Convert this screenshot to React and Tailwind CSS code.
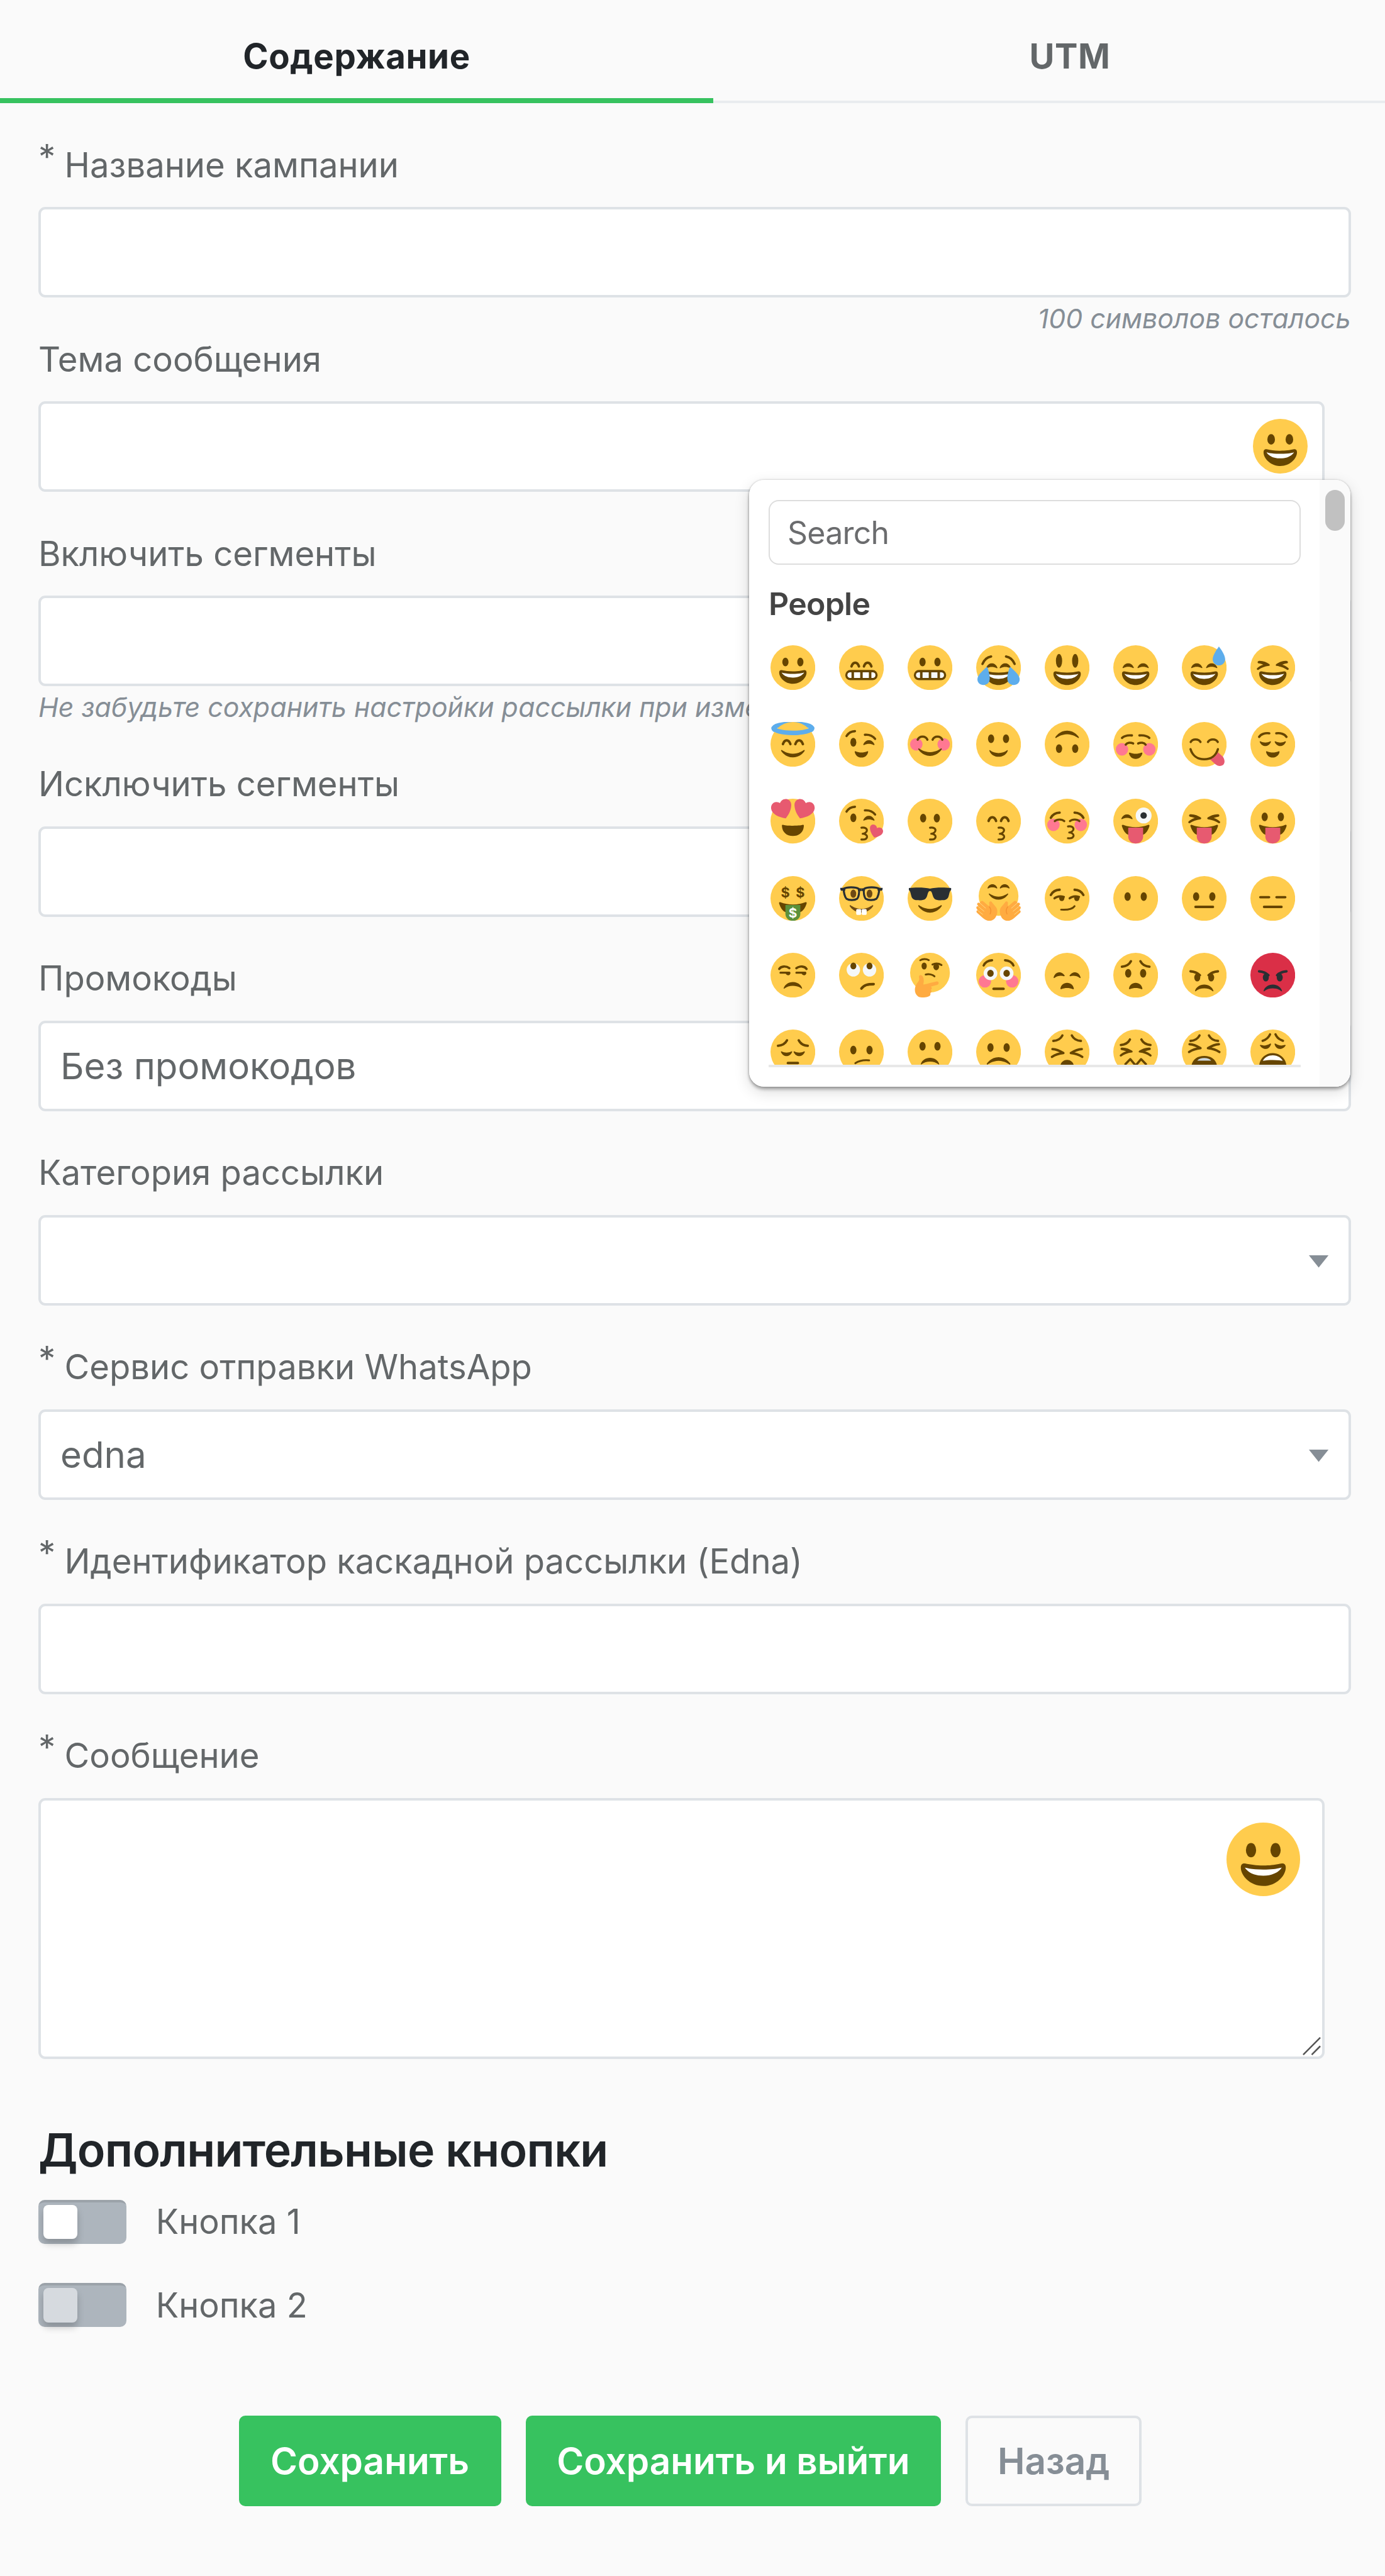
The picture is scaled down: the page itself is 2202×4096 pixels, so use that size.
import React, { useState } from "react";

//emoji colors
const YELLOW = "#ffcc4d";
const BROWN = "#664500";
const DARK = "#292f33";
const BLUE = "#5dadec";
const PINK = "#ff7892";
const RED = "#e75a70";
const HAND = "#ffab41";

//shapes shared between faces, everything is drawn on a 36x36 grid
const BIG_SMILE =
  "M27.335 22.629c-.178-.161-.444-.171-.635-.029-.039.029-3.922 2.9-8.7 2.9-4.766 0-8.662-2.871-8.7-2.9-.191-.142-.457-.13-.635.029-.177.16-.217.424-.094.628C8.7 23.472 11.788 28.5 18 28.5s9.301-5.028 9.429-5.243c.123-.205.084-.468-.094-.628z";
const SMALL_SMILE =
  "M10.6 23C10.5 22.6 10.9 22.5 11.2 22.8C13 24.3 15.5 25 18 25S23 24.3 24.8 22.8C25.1 22.5 25.5 22.6 25.4 23C24.5 26 21.5 28 18 28S11.5 26 10.6 23z";
const LITTLE_MOUTH =
  "M12.6 24.1C12.5 23.5 13 23.4 13.4 23.6C14.8 24.2 16.4 24.5 18 24.5S21.2 24.2 22.6 23.6C23 23.4 23.5 23.5 23.4 24.1C22.9 26.7 20.8 28.6 18 28.6S13.1 26.7 12.6 24.1z";
const KISS =
  "M18 23.3C21 22.9 22.5 24 22.4 25.5C22.3 27 20.5 28 19 28.2C20.8 28.3 22.6 29.2 22.5 30.7C22.3 32.3 20.5 33 18 32.8";

const Mirror = ({ children }) => (
  <>
    {children}
    <g transform="matrix(-1 0 0 1 36 0)">{children}</g>
  </>
);

const Line = ({ d, w = 2, color = BROWN }) => (
  <path d={d} fill="none" stroke={color} strokeWidth={w} strokeLinecap="round" strokeLinejoin="round" />
);

const Head = ({ color = YELLOW, cy = 18, r = 18 }) => <circle cx="18" cy={cy} r={r} fill={color} />;

const Eyes = ({ y, dx = 6, ry = 3.5, rx = 2.5, color = BROWN }) => (
  <>
    <ellipse cx={18 - dx} cy={y} rx={rx} ry={ry} fill={color} />
    <ellipse cx={18 + dx} cy={y} rx={rx} ry={ry} fill={color} />
  </>
);

//closed eye, arched up
const Closed = ({ x, y, turn = 0, flip = 1 }) => (
  <path
    transform={`translate(${x} ${y}) rotate(${turn}) scale(1 ${flip})`}
    d="M-4.5 3.3C-3.4 .9 -1.7 0 0 0S3.4 .9 4.5 3.3C4.6 3.8 4.2 4 3.7 3.7C1.5 2.6 -1.5 2.6 -3.7 3.7C-4.2 4 -4.6 3.8 -4.5 3.3z"
    fill={BROWN}
  />
);

const Caret = ({ y = 0 }) => (
  <g transform={`translate(0 ${y})`}>
    <Mirror>
      <Line d="M10 17C10.4 15.8 11.4 14 13 14S15.6 15.8 16 17" />
    </Mirror>
  </g>
);

const Grin = ({ y = 0 }) => (
  <g transform={`translate(0 ${y})`}>
    <path
      d="M18 21c-3.623 0-6.027-.422-9-1-.679-.131-2 0-2 2 0 4 4.595 9 11 9 6.404 0 11-5 11-9 0-2-1.321-2.132-2-2-2.973.578-5.377 1-9 1z"
      fill={BROWN}
    />
    <path d="M9 22s3 1 9 1 9-1 9-1-2 4-9 4-9-4-9-4z" fill="#fff" />
  </g>
);

const Teeth = ({ color }) => (
  <>
    <rect x="5" y="19.9" width="26" height="8.2" rx="4.1" fill={BROWN} />
    <rect x="6.7" y="21.7" width="22.6" height="4.6" rx="2.3" fill={color} />
    <path d="M10 21h2v6h-2zM17 21h2v6h-2zM24 21h2v6h-2z" fill={BROWN} />
  </>
);

const Squint = ({ y = 0 }) => (
  <g transform={`translate(0 ${y})`}>
    <Mirror>
      <path
        d="M6.8 12.6C10 12.4 13 13.6 15.2 15.2C15.9 15.8 15.6 16.5 14.9 16.6C11.5 17 8.6 18.2 6.5 19.7C5.5 20.2 4.7 19.1 5.5 18.3C7 17 8.6 16.2 10.4 15.7C9.2 15.1 8 14.8 6.8 14.6C5.5 14.4 5.5 12.8 6.8 12.6z"
        fill={BROWN}
      />
    </Mirror>
  </g>
);

const Squeeze = () => (
  <Mirror>
    <Line d="M6.2 15.7C9 15.8 12 17 15 18.9C11.5 19.2 8.5 20.2 5.8 22" w={1.9} />
  </Mirror>
);

const Cheeks = ({ y }) => (
  <Mirror>
    <circle cx="7" cy={y} r="5" fill={PINK} />
  </Mirror>
);

//worried brows
const Worry = ({ x = 0, y = 0 }) => (
  <Mirror>
    <g transform={`translate(${x} ${y})`}>
      <Line d="M6.9 11.2C10 11 12.8 9.5 14.2 6.8" w={1.9} />
    </g>
  </Mirror>
);

const Frown = ({ d, y = 0 }) => (
  <g transform={`translate(0 ${y})`}>
    <path transform="matrix(1 0 0 -1 0 51)" d={d} fill={BROWN} />
  </g>
);

const Tongue = ({ color = RED }) => (
  <>
    <path
      d="M7 22.2C6.6 21.2 7.3 20.8 8.2 21.1C11 22.2 14.5 22.9 18 22.9S25 22.2 27.8 21.1C28.7 20.8 29.4 21.2 29 22.2C28 25.5 26.2 28 24 29H12C9.8 28 8 25.5 7 22.2z"
      fill={BROWN}
    />
    <path d="M12 23.3H24V30.3C24 34 21 36 18 36S12 34 12 30.3z" fill={color} />
  </>
);

const WinkEyes = ({ y = 0 }) => (
  <g transform={`translate(0 ${y})`}>
    <Line d="M6 11.3C7.5 8.9 10 7.5 12.8 7.4" w={1.8} />
    <Line d="M20.8 10.3C24 10 27 11.2 29 13.6" w={1.8} />
    <ellipse cx="11.5" cy="16.3" rx="2.4" ry="3.5" fill={BROWN} />
    <Closed x={24} y={14.7} />
  </g>
);

const SideBrows = ({ y = 0 }) => (
  <g transform={`translate(0 ${y})`}>
    <Mirror>
      <Line d="M4.9 15C6.3 12.4 8.8 10.9 12 10.8" w={1.9} />
    </Mirror>
  </g>
);

const Angry = ({ color }) => (
  <>
    <Mirror>
      <Line d="M7 14.9C10 15.1 12.6 16.2 14.5 18" color={color} />
      <ellipse cx="12.4" cy="19.8" rx="2.4" ry="3.2" fill={color} />
    </Mirror>
    <path transform="matrix(1 0 0 -1 0 53.6)" d={SMALL_SMILE} fill={color} />
  </>
);

const Dollar = ({ x, y, size, color }) => (
  <text x={x} y={y} fontSize={size} fontWeight="700" fontFamily="Inter, sans-serif" textAnchor="middle" fill={color}>
    $
  </text>
);

const faces = {
  grinning: <><Head /><Eyes y={13.5} /><Grin /></>,
  beaming: <><Head /><Caret /><Teeth color="#fff" /></>,
  grimacing: <><Head /><Eyes y={13.5} /><Teeth color="#f5f8fa" /></>,
  joy: (
    <>
      <Head />
      <Mirror>
        <Line d="M5.1 15C6.2 12.3 8.5 9.6 12 9" w={1.9} />
        <Closed x={12.6} y={14.6} />
      </Mirror>
      <Grin y={1} />
      <Mirror>
        <path
          d="M8.8 17.3C10.5 21.5 11.2 25.5 10.8 28C10.4 30.5 8.4 32 6 32C3 32 1 30 1 27.3C1 24 5.5 20 8.8 17.3z"
          fill={BLUE}
        />
      </Mirror>
    </>
  ),
  smiley: <><Head /><Eyes y={12.5} dx={6.5} ry={5.6} /><Grin y={1} /></>,
  smile: <><Head /><Closed x={12} y={14.5} /><Closed x={24} y={14.5} /><Grin y={1} /></>,
  sweatSmile: (
    <>
      <Head /><Closed x={12} y={14.5} /><Closed x={24} y={14.5} /><Grin y={1} />
      <path d="M29.8 1C32.5 4.5 34.8 8.5 34.8 11.2C34.8 14 32.6 16.2 29.8 16.2S24.8 14 24.8 11.2C24.8 8.5 27.2 4.5 29.8 1z" fill={BLUE} />
    </>
  ),
  laughing: <><Head /><Squint /><Grin y={1} /></>,

  innocent: (
    <>
      <ellipse cx="18" cy="5.2" rx="15.5" ry="3.8" fill="none" stroke={BLUE} strokeWidth="3.6" />
      <Head />
      <path d="M2.5 4.6C2.5 7 9.5 8.8 18 8.8S33.5 7 33.5 4.6" fill="none" stroke={BLUE} strokeWidth="3.6" />
      <Caret y={.8} />
      <path d={BIG_SMILE} fill={BROWN} />
    </>
  ),
  wink: <><Head /><WinkEyes /><path d={LITTLE_MOUTH} fill={BROWN} /></>,
  blush: (
    <>
      <Head /><Cheeks y={18} />
      <Mirror><Line d="M8.1 14.2C9 12.4 10.5 11.8 12 11.8S15 12.4 15.9 14.2" w={1.8} /></Mirror>
      <path transform="translate(0 -1.2)" d={BIG_SMILE} fill={BROWN} />
    </>
  ),
  slightSmile: <><Head /><Eyes y={13.5} /><path d={SMALL_SMILE} fill={BROWN} /></>,
  upsideDown: (
    <>
      <Head /><Eyes y={21.4} dx={6.5} />
      <path transform="rotate(180 18 17.7)" d={BIG_SMILE} fill={BROWN} />
    </>
  ),
  relaxed: (
    <>
      <Head /><Cheeks y={22} />
      <Mirror>
        <Line d="M7 12.8C9 11 12 10.5 15 10.8" w={1.8} />
        <Line d="M10 18.2C11.2 16.5 14 16.3 16 17.3" w={1.8} />
      </Mirror>
      <path transform="translate(0 1.1)" d={LITTLE_MOUTH} fill={BROWN} />
    </>
  ),
  yum: (
    <>
      <Head />
      <Mirror><Line d="M7.1 16.1C8 14.6 9.5 14 11 14S14.1 14.6 15 16.1" w={1.8} /></Mirror>
      <path d="M29 24.3L33 28C35 31 34.5 33.5 33 34.7C31 36 28.5 35.3 27 34L22.6 29.9C25.5 28.8 27.8 27 29 24.3z" fill={RED} />
      <Line d="M7 21.9C8.5 27 12.5 30 18 30S27.5 27 29 21.9" w={1.8} />
    </>
  ),
  relieved: (
    <>
      <Head />
      <Mirror>
        <Line d="M7 12C8.5 9.6 12 8.6 15.2 9.1" w={1.8} />
        <Closed x={12} y={19.4} flip={-1} />
      </Mirror>
      <path d={LITTLE_MOUTH} fill={BROWN} />
    </>
  ),

  heartEyes: (
    <>
      <Head />
      <Mirror>
        <path
          d="M12.3 15.8C6.5 15 1.2 12.5 .5 8C.2 4.8 2.2 2.7 4.7 2.6C6 2.6 7 3 7.7 3.6C8.3 1.8 9.8 .4 12 .3C15 .2 16.8 2.5 16.7 5.3C16.5 9.5 14.5 13 12.3 15.8z"
          fill={RED}
        />
      </Mirror>
      <path d="M9.2 22C9 21 9.8 20.9 10.5 21.1C13 21.9 23 21.9 25.5 21.1C26.2 20.9 27 21 26.8 22C26.5 27 23 30 18 30S9.5 27 9.2 22z" fill={BROWN} />
    </>
  ),
  kissHeart: (
    <>
      <Head /><WinkEyes y={-.9} /><Line d={KISS} w={1.6} />
      <path
        d="M28.3 31.2C26 28.5 24.6 25.5 24.9 23C25.2 21 27 20.3 28.7 21C29.8 21.5 30.4 22.5 30.5 23.6C32 22.9 34 23 35 24.6C36 26.5 35 28.3 33.5 29.3C32 30.3 30 31 28.3 31.2z"
        fill={RED}
      />
    </>
  ),
  kissing: <><Head /><Eyes y={15.6} dx={5.5} /><Line d={KISS} w={1.6} /></>,
  kissingSmile: <><Head /><Caret y={.9} /><Line d={KISS} w={1.6} /></>,
  kissingClosed: (
    <>
      <Head /><Cheeks y={21} /><SideBrows y={.4} />
      <Mirror><Line d="M8.1 18C10 16.3 13.8 16.3 15.7 18" w={1.7} /></Mirror>
      <g transform="translate(.7 -1)"><Line d={KISS} w={1.6} /></g>
    </>
  ),
  zany: (
    <>
      <Head /><Closed x={11} y={12.6} />
      <circle cx="24.4" cy="13.5" r="6.4" fill="#f5f8fa" />
      <circle cx="24.4" cy="13.5" r="2.6" fill={DARK} />
      <Tongue />
    </>
  ),
  squintTongue: <><Head /><Squint y={-.1} /><Tongue /></>,
  tongue: <><Head /><Eyes y={14.6} dx={6.5} /><Tongue /></>,

  money: (
    <>
      <Head />
      <Dollar x={12} y={17} size={11} color={BROWN} />
      <Dollar x={24} y={17} size={11} color={BROWN} />
      <Tongue color="#5c913b" />
      <Dollar x={18} y={33.3} size={10.5} color="#fff" />
    </>
  ),
  nerd: (
    <>
      <Head />
      <ellipse cx="11.5" cy="14.2" rx="2.3" ry="3.3" fill="#6e4a14" />
      <ellipse cx="24.5" cy="14.2" rx="2.3" ry="3.3" fill="#6e4a14" />
      <Mirror>
        <Line d="M3.8 10.2C6 8.7 13.5 8.6 15.8 10.3C16.7 13 15.6 17.3 14.5 18.3C12.5 19.6 8 19.6 6 18.3C4.7 17 3.6 13 3.8 10.2z" w={1.6} color={DARK} />
        <path d="M1 9.5H5V11.8H1.6C1 11.3 .9 10.2 1 9.5zM15.5 10C16.5 9.8 17 9.8 18 9.8V12H15.5z" fill={DARK} />
      </Mirror>
      <path transform="translate(0 .9)" d={BIG_SMILE} fill="#6e4a14" />
      <rect x="13.8" y="26.6" width="4" height="4.6" rx=".8" fill="#fff" />
      <rect x="18.2" y="26.6" width="4" height="4.6" rx=".8" fill="#fff" />
    </>
  ),
  sunglasses: (
    <>
      <Head />
      <path
        d="M1 9.6C6 9 14 9 18 10.1C22 9 30 9 35 9.6V11.3C34 11.8 33.8 13 33.4 14.5C32.8 17 32.5 19.3 28 19.4C22 19.6 21.2 18.5 20.2 15.5C19.7 13.8 19.3 12 18 12S16.3 13.8 15.8 15.5C14.8 18.5 14 19.6 8 19.4C3.5 19.3 3.2 17 2.6 14.5C2.2 13 2 11.8 1 11.3z"
        fill={DARK}
      />
      <path transform="translate(0 .9)" d={BIG_SMILE} fill={BROWN} />
    </>
  ),
  hugging: (
    <>
      <Head cy={16} r={16} />
      <Mirror>
        <g transform="translate(2.1 .7) scale(.87)"><Closed x={12.6} y={6.8} /></g>
      </Mirror>
      <path transform="translate(3.2 -4.4) scale(.82)" d={BIG_SMILE} fill={BROWN} />
      <Mirror>
        <path
          d="M10.6 21C11.3 19.9 12.6 20.4 12.8 21.3L15.3 24.3C17.3 26.3 17.4 29 16.2 32C15 35 12.6 36 10.5 36C8 36 6 34.5 4 32.5L.6 29.4C-.2 28.4 .4 27.3 1.4 27.7L.3 26C-.2 24.7 .7 23.9 1.8 24.4L.8 22.9C.6 21.5 1.8 20.9 2.8 21.7L3.6 20.4C4.6 19.6 5.3 20 6 20.6L10.3 24.3C10.9 23 10.1 22 10.6 21z"
          fill={HAND}
        />
        <Line d="M3.2 21.9L7.6 25.8M1.9 24.7L6.3 28.3M1.6 27.9L5.2 30.8" w={.5} color="#ffd983" />
        <Line d="M10.6 24.8C12 26.4 12.2 28.5 11.2 30.5" w={.7} color="#f39130" />
      </Mirror>
    </>
  ),
  smirk: (
    <>
      <Head /><SideBrows y={.2} />
      <Line d="M7.8 17.9C9.6 16.4 12.6 16 15.4 16.7" w={1.7} />
      <Line d="M20 17.9C21.8 16.4 24.8 16 27.6 16.7" w={1.7} />
      <circle cx="13.7" cy="18" r="2.1" fill={BROWN} />
      <circle cx="25.8" cy="18" r="2.1" fill={BROWN} />
      <Line d="M13.2 27C18 27.3 22 27 24 24.2" w={1.5} />
    </>
  ),
  noMouth: <><Head /><Eyes y={16.5} dx={6.5} /></>,
  neutral: <><Head /><Eyes y={16.5} dx={6.5} /><Line d="M11 24.8H25" /></>,
  expressionless: <><Head /><Line d="M8 17H15M21 17H28M11 24.8H25" /></>,

  unamused: (
    <>
      <Head />
      <Mirror><Line d="M7 13C8.5 10.6 12.5 10.4 15.2 12.4" w={1.8} /></Mirror>
      <Line d="M8 16H15.2M20.8 16H28" w={1.6} />
      <path d="M12 16H16C16 19 12.5 18.5 12 16zM24.8 16H28.8C28.8 19 25.3 18.5 24.8 16z" fill={BROWN} />
      <Frown d={SMALL_SMILE} y={.5} />
    </>
  ),
  rollingEyes: (
    <>
      <Head />
      <Eyes y={13.7} dx={6.5} rx={5.4} ry={5.4} color="#f5f8fa" />
      <Eyes y={10.6} dx={6.5} rx={2.4} ry={2.7} />
      <Line d="M18 28.7C20.2 25.8 23 25.2 27.8 25.2" w={2.1} />
    </>
  ),
  thinking: (
    <>
      <Head cy={16} r={16} />
      <Line d="M10.2 6C12 4.8 15 4.7 17 5.9" w={1.5} />
      <ellipse cx="13.3" cy="10.6" rx="2.1" ry="2.8" fill={BROWN} />
      <ellipse cx="23" cy="11.2" rx="2.3" ry="2.8" fill={BROWN} />
      <Line d="M20 9.4C22.5 8.3 25 8.6 27.2 9.8" w={1.6} />
      <Line d="M14.5 17.5C17 16.8 20 17.4 21.6 18.9" w={1.5} />
      <path
        d="M10 18C12 17.8 13 20 13 22.5C13 24 12.5 25 12.8 25.5C16 25 20 23.7 23.5 23C25.3 22.8 25.5 25.3 23.8 25.8L18.7 27.2C19.7 28 19.7 29 18.7 29.7C19.5 30.7 19.3 31.7 18.3 32.4C18.6 33.8 18 34.7 17 35C14 36.3 10 36.2 8.3 35C5.5 33 5.4 29 6.5 26.5C7.5 24 9.8 22.5 9.3 20.5C9 19 9.2 18.3 10 18z"
        fill={HAND}
      />
    </>
  ),
  flushed: (
    <>
      <Head /><Cheeks y={23} />
      <Mirror><Line d="M6 10.2C7.2 7.7 9.8 6.2 12.8 6" w={1.8} /></Mirror>
      <Eyes y={16.5} dx={6.5} rx={5.5} ry={5.5} color="#f5f8fa" />
      <Eyes y={16.5} dx={6.5} rx={2.6} ry={2.8} />
      <Line d="M14 28.9H22" />
    </>
  ),
  disappointed: (
    <>
      <Head />
      <Mirror><Closed x={11} y={15.8} turn={-10} /></Mirror>
      <Frown d={LITTLE_MOUTH} y={1.8} />
    </>
  ),
  worried: <><Head /><Worry /><Eyes y={16.5} /><Frown d={LITTLE_MOUTH} y={1.8} /></>,
  angry: <><Head /><Angry color={BROWN} /></>,
  rage: <><Head color="#da2f47" /><Angry color={DARK} /></>,

  pensive: (
    <>
      <Head /><Worry x={-.9} y={1.9} />
      <Mirror><Closed x={12.9} y={21.4} flip={-1} /></Mirror>
      <Line d="M14 26.9H22" />
    </>
  ),
  confused: <><Head /><Eyes y={16.5} dx={6.5} /><Line d="M13.1 27.1C16.5 24.8 20 24.4 24.2 24.8" w={1.5} /></>,
  slightFrown: <><Head /><Eyes y={13.5} /><Frown d={SMALL_SMILE} y={-.2} /></>,
  frowning: <><Head /><Eyes y={14.5} dx={6.5} /><Frown d={BIG_SMILE} y={-.3} /></>,
  persevere: <><Head /><Worry y={-2} /><Squeeze /><Frown d={LITTLE_MOUTH} y={2} /></>,
  confounded: <><Head /><Worry x={-.8} y={1.2} /><Squint y={1.9} /><Line d="M9.8 27.8L13.7 23.8L18 29L22.3 23.8L26.2 27.8" w={1.8} /></>,
  tired: (
    <>
      <Head /><Worry y={-2} />
      <g transform="translate(0 -3.9)"><Squeeze /></g>
      <path d="M7.6 30C8 24.5 12 21.2 18 21.2S28 24.5 28.4 30z" fill={BROWN} />
      <path d="M12.4 25C13.6 23.5 15.6 22.9 18 22.9S22.4 23.5 23.6 25z" fill="#ccd6dd" />
    </>
  ),
  weary: (
    <>
      <Head />
      <Mirror>
        <Line d="M9.8 9.1C12.2 8.3 14.7 6.4 15.8 3.9" w={1.8} />
        <Closed x={12.6} y={15.6} turn={-8} flip={-1} />
      </Mirror>
      <path d="M7 30C7 23.5 12 19 18 19S29 23.5 29 30z" fill={BROWN} />
      <path d="M10 25.2C11.5 22.3 14.5 20.7 18 20.7S24.5 22.3 26 25.2C21 24.3 15 24.3 10 25.2z" fill="#fff" />
    </>
  ),
};

const Emoji = ({ name, className }) => (
  <svg viewBox="0 0 36 36" className={className} role="img" aria-label={name}>
    {faces[name]}
  </svg>
);

const inputClass =
  "block h-[144.2px] w-full rounded-[11px] border-4 border-[#dee2e6] bg-white px-[31px] pt-[2px] text-[58.2px] text-[#636769] outline-none";

const Label = ({ required, children }) => (
  <label className="flex h-[164.8px] items-end pb-[26.5px] text-[54.4px] leading-[82px] text-[#636769]">
    <span>
      {required && <sup className="top-[-0.24em] mr-[-1px] text-[100%] leading-0">*</sup>}
      {required && " "}
      {children}
    </span>
  </label>
);

const Hint = ({ className, children }) => (
  <div className={`text-[42.8px] leading-[67.5px] text-[#868e96] italic whitespace-nowrap ${className}`}>{children}</div>
);

const Select = ({ value }) => (
  <div className={`${inputClass} flex items-center justify-between`}>
    <span>{value}</span>
    <svg viewBox="0 0 32 20" className="mt-[2px] h-[19.5px] w-[31.2px]">
      <path d="M0 0H32L16 20z" fill="#868e96" />
    </svg>
  </div>
);

const EmojiPicker = () => {
  //state
  const [search, setSearch] = useState("");
  return (
    <div className="absolute top-[290px] right-[1px] z-10 flex h-[965px] w-[956px] overflow-hidden rounded-[24px] bg-white">
      <div className="flex w-[907px] flex-col pt-[32px] pl-[31.5px]">
        <input
          className="h-[103px] w-[846px] rounded-[16px] border-2 border-[#dddddd] px-[28px] text-[50px] tracking-[-0.015em] text-[#636769] outline-none placeholder:text-[#6b6c6e]"
          placeholder="Search"
          value={search}
          onChange={(event) => setSearch(event.target.value)}
        />
        <div className="mt-[32px] text-[50px] leading-[60px] font-semibold tracking-[-0.015em] text-[#444444]">People</div>
        <div className="mt-[35.5px] h-[671.5px] w-[846px] overflow-hidden border-b-4 border-[#e8e8e8] pl-[2.5px]">
          <div className="grid grid-cols-[repeat(8,109.05px)] gap-y-[51px]">
            {Object.keys(faces).map((name) => (
              <Emoji key={name} name={name} className="size-[71.2px]" />
            ))}
          </div>
        </div>
      </div>
      <div className="flex grow justify-center bg-[#fafafa] pt-[16px]">
        <div className="h-[65px] w-[31px] rounded-full bg-[#c1c1c1]"></div>
      </div>
    </div>
  );
};

const Toggle = ({ label, disabled }) => (
  <div className="flex h-[70.2px] items-center gap-[46.5px]">
    <div className="h-[70.2px] w-[140.3px] rounded-[10px] bg-[#adb5bd] p-[7.8px] shadow-[inset_0_8px_0_-4px_rgba(0,0,0,0.1)]">
      <div
        className={`size-[54.6px] rounded-[8px] shadow-[0_8px_12px_rgba(0,0,0,0.2)] ${disabled ? "bg-[#d6dadf]" : "bg-white"}`}
      ></div>
    </div>
    <span className="text-[54.2px] text-[#636769]">{label}</span>
  </div>
);

const App = () => {
  return (
    <div className="h-[4096px] w-[2202px] overflow-hidden bg-[#fafafa] font-['Inter',sans-serif]">
      {/* tabs */}
      <div className="flex h-[163.7px] text-[54.56px] font-bold tracking-[0.012em]">
        <div className="flex w-[1134px] shrink-0 items-center justify-center border-b-8 border-[#37c25f] pt-[24px] text-[#212529]">
          Содержание
        </div>
        <div className="flex w-[1134px] shrink-0 items-center justify-center border-b-4 border-[#e9ecef] pt-[20px] text-[#636769]">
          UTM
        </div>
      </div>

      <div className="w-[2147.5px] pt-[.8px] pl-[61px]">
        <Label required>Название кампании</Label>
        <input className={inputClass} />
        <Hint className="h-0 text-right">100 символов осталось</Hint>

        <div className="relative">
          <Label>Тема сообщения</Label>
          <div className="relative w-[2044.5px]">
            <input className={inputClass} />
            <Emoji name="grinning" className="absolute top-[28px] right-[27px] size-[87px]" />
          </div>
          <Hint className="h-0 text-right">100 символов осталось</Hint>
          <div className="absolute top-[290px] right-[1px] h-[965px] w-[956px] rounded-[24px] shadow-[0_0_3px_rgba(0,0,0,0.25),0_4px_5px_rgba(0,0,0,0.3),0_8px_24px_rgba(0,0,0,0.14)]"></div>
          <EmojiPicker />
        </div>

        <Label>Включить сегменты</Label>
        <input className={inputClass} />
        <Hint className="h-[57.5px]">Не забудьте сохранить настройки рассылки при изменении</Hint>

        <Label>Исключить сегменты</Label>
        <input className={inputClass} />

        <Label>Промокоды</Label>
        <Select value="Без промокодов" />

        <Label>Категория рассылки</Label>
        <Select value="" />

        <Label required>Сервис отправки WhatsApp</Label>
        <Select value="edna" />

        <Label required>Идентификатор каскадной рассылки (Edna)</Label>
        <input className={inputClass} />

        <Label required>Сообщение</Label>
        <div className="relative w-[2044.5px]">
          <textarea className="block h-[415px] w-full resize-none rounded-[11px] border-4 border-[#dee2e6] bg-white p-[31px] text-[58.2px] text-[#636769] outline-none"></textarea>
          <Emoji name="grinning" className="absolute top-[39px] right-[38.5px] size-[117px]" />
          <svg viewBox="0 0 30 30" className="absolute right-[6px] bottom-[6px] size-[29px]">
            <path d="M1 29L29 1M15 29L29 15" stroke="#555555" strokeWidth="2.6" />
          </svg>
        </div>

        <h2 className="flex h-[224.1px] items-end pb-[34px] text-[73.4px] leading-[88.8px] font-semibold tracking-[-0.01em] text-[#212529]">
          Дополнительные кнопки
        </h2>
        <div className="flex flex-col gap-[62.3px]">
          <Toggle label="Кнопка 1" />
          <Toggle label="Кнопка 2" disabled />
        </div>

        <div className="mt-[140.3px] flex h-[144.2px] gap-[39.4px] pl-[318.5px] text-[58.4px] font-semibold">
          <button className="w-[417px] rounded-[10px] bg-[#37c25f] text-white">Сохранить</button>
          <button className="w-[660px] rounded-[10px] bg-[#37c25f] text-white">Сохранить и выйти</button>
          <button className="w-[280px] rounded-[10px] border-4 border-[#dee2e6] text-[#868e96]">Назад</button>
        </div>
      </div>
    </div>
  );
};

export default App;
